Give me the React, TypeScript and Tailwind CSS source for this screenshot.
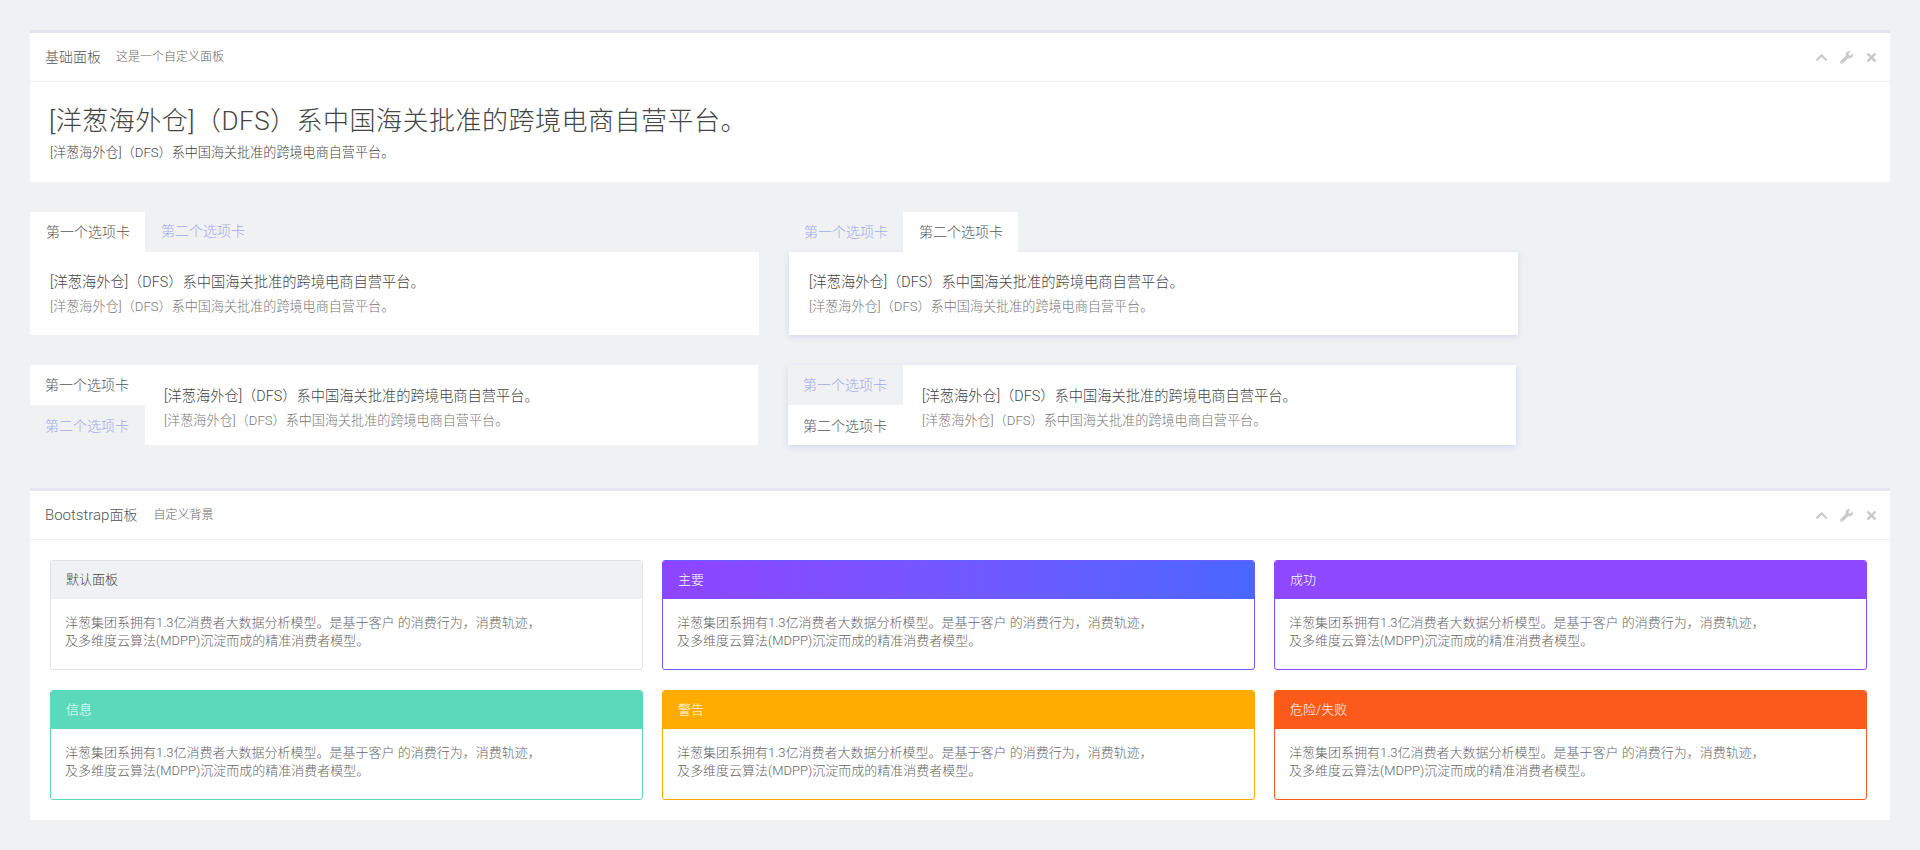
import type { ReactNode } from "react";
import { FaChevronUp, FaTimes, FaWrench } from "react-icons/fa";

const LONG_TEXT = "[洋葱海外仓]（DFS）系中国海关批准的跨境电商自营平台。";

function PanelHeader({ title, sub }: { title: ReactNode; sub: string }) {
  return (
    <div className="flex h-[49px] items-center border-b border-[#f0f1f3] pl-[15px] pr-[7px]">
      <h3 className="text-[14px] text-[#555]">{title}</h3>
      <span className="ml-[15px] text-[12px] text-[#666]">{sub}</span>
      <div className="ml-auto flex items-center text-[13px] text-[#c8c8c8]">
        <span className="flex w-[26px] justify-center"><FaChevronUp /></span>
        <span className="flex w-[25px] justify-center"><FaWrench /></span>
        <span className="flex w-[24px] justify-center"><FaTimes /></span>
      </div>
    </div>
  );
}

function TabText() {
  return (
    <>
      <p className="text-[14.25px] leading-[20px] text-[#444]">{LONG_TEXT}</p>
      <p className="mt-[5px] text-[13.1px] leading-[20px] text-[#777]">{LONG_TEXT}</p>
    </>
  );
}

function TabButton({ label, active, inset = "pl-[16px]" }: { label: string; active?: boolean; inset?: string }) {
  return (
    <div
      className={
        active
          ? `flex h-[40px] w-[115px] items-center bg-white text-[14px] text-[#555] ${inset}`
          : `flex h-[40px] w-[115px] items-center text-[14px] text-[#a3a9e6] ${inset}`
      }
    >
      {label}
    </div>
  );
}

const cards = [
  { title: "默认面板", head: "bg-[#f0f1f3] text-[#444]", border: "border-[#e2e3e8]" },
  { title: "主要", head: "bg-gradient-to-r from-[#8e44ff] to-[#4a66ff] text-white", border: "border-[#6a5cff]" },
  { title: "成功", head: "bg-[#8e48ff] text-white", border: "border-[#8e48ff]" },
  { title: "信息", head: "bg-[#5cd9bb] text-white", border: "border-[#5cd9bb]" },
  { title: "警告", head: "bg-[#ffab00] text-white", border: "border-[#ffab00]" },
  { title: "危险/失败", head: "bg-[#fc5a1a] text-white", border: "border-[#fc5a1a]" },
];

export default function App() {
  return (
    <div className="min-h-screen bg-[#f0f1f3] px-[30px] pt-[30px] pb-[30px] font-['Roboto','Noto_Sans_CJK_SC',sans-serif] font-light">
      {/* Basic panel */}
      <section className="border-t-[3px] border-[#e4e5ee] bg-white">
        <PanelHeader title="基础面板" sub="这是一个自定义面板" />
        <div className="h-[100px] px-[20px] pt-[21px]">
          <h1 className="-ml-px text-[26px] leading-[36px] tracking-[0.5px] text-[#444]">{LONG_TEXT}</h1>
          <p className="mt-[4px] text-[13.1px] leading-[20px] text-[#444]">{LONG_TEXT}</p>
        </div>
      </section>

      {/* Tabs */}
      <div className="mt-[30px] grid grid-cols-[729px_729px] gap-x-[30px]">
        <div>
          <div className="flex">
            <TabButton label="第一个选项卡" active />
            <TabButton label="第二个选项卡" inset="pl-[16px] pb-[2px]" />
          </div>
          <div className="h-[83px] bg-white px-[20px] pt-[20px]">
            <TabText />
          </div>
        </div>
        <div>
          <div className="-ml-px flex">
            <TabButton label="第一个选项卡" />
            <TabButton label="第二个选项卡" active />
          </div>
          <div className="h-[83px] bg-white px-[20px] pt-[20px] shadow-[0_2px_6px_rgba(100,110,220,0.2)]">
            <TabText />
          </div>
        </div>
      </div>

      <div className="mt-[30px] grid grid-cols-[728px_728px] gap-x-[30px]">
        <div className="flex h-[80px]">
          <div className="w-[115px]">
            <TabButton label="第一个选项卡" active inset="pl-[15px]" />
            <TabButton label="第二个选项卡" inset="pl-[15px] pt-[3px]" />
          </div>
          <div className="flex-1 bg-white px-[19px] pt-[21px]">
            <TabText />
          </div>
        </div>
        <div className="flex h-[80px] shadow-[0_2px_6px_rgba(100,110,220,0.2)]">
          <div className="w-[115px] bg-[#f0f1f3]">
            <TabButton label="第一个选项卡" inset="pl-[15px]" />
            <TabButton label="第二个选项卡" active inset="pl-[15px] pt-[3px]" />
          </div>
          <div className="flex-1 bg-white px-[19px] pt-[21px]">
            <TabText />
          </div>
        </div>
      </div>

      {/* Bootstrap panel */}
      <section className="mt-[43px] border-t-[3px] border-[#e4e5ee] bg-white">
        <PanelHeader title={<><span className="text-[15px]">Bootstrap</span><span className="mr-px">面板</span></>} sub="自定义背景" />
        <div className="grid grid-cols-3 gap-x-[19px] gap-y-[20px] pl-[20px] pr-[23px] pt-[20px] pb-[20px]">
          {cards.map((card) => (
            <div key={card.title} className={`h-[110px] overflow-hidden rounded-[3px] border ${card.border}`}>
              <div className={`flex h-[38px] items-center px-[15px] text-[13px] ${card.head}`}>{card.title}</div>
              <div className="px-[14px] pt-[15px] text-[13px] leading-[18px] text-[#666]">
                洋葱集团系拥有1.3亿消费者大数据分析模型。是基于客户 的消费行为，消费轨迹，
                <br />
                及多维度云算法(MDPP)沉淀而成的精准消费者模型。
              </div>
            </div>
          ))}
        </div>
      </section>
    </div>
  );
}
